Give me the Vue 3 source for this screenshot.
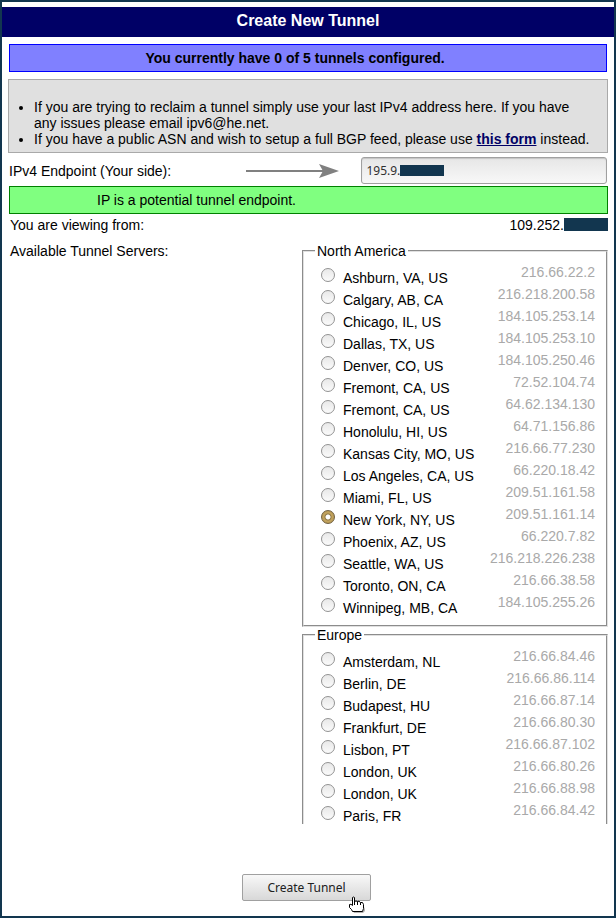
<script setup>
import { ref } from 'vue';

const endpoint = ref('195.9.');
const selected = ref('209.51.161.14');

const regions = [
  {
    name: 'North America',
    open: false,
    servers: [
      { city: 'Ashburn, VA, US', ip: '216.66.22.2' },
      { city: 'Calgary, AB, CA', ip: '216.218.200.58' },
      { city: 'Chicago, IL, US', ip: '184.105.253.14' },
      { city: 'Dallas, TX, US', ip: '184.105.253.10' },
      { city: 'Denver, CO, US', ip: '184.105.250.46' },
      { city: 'Fremont, CA, US', ip: '72.52.104.74' },
      { city: 'Fremont, CA, US', ip: '64.62.134.130' },
      { city: 'Honolulu, HI, US', ip: '64.71.156.86' },
      { city: 'Kansas City, MO, US', ip: '216.66.77.230' },
      { city: 'Los Angeles, CA, US', ip: '66.220.18.42' },
      { city: 'Miami, FL, US', ip: '209.51.161.58' },
      { city: 'New York, NY, US', ip: '209.51.161.14' },
      { city: 'Phoenix, AZ, US', ip: '66.220.7.82' },
      { city: 'Seattle, WA, US', ip: '216.218.226.238' },
      { city: 'Toronto, ON, CA', ip: '216.66.38.58' },
      { city: 'Winnipeg, MB, CA', ip: '184.105.255.26' }
    ]
  },
  {
    name: 'Europe',
    open: true,
    servers: [
      { city: 'Amsterdam, NL', ip: '216.66.84.46' },
      { city: 'Berlin, DE', ip: '216.66.86.114' },
      { city: 'Budapest, HU', ip: '216.66.87.14' },
      { city: 'Frankfurt, DE', ip: '216.66.80.30' },
      { city: 'Lisbon, PT', ip: '216.66.87.102' },
      { city: 'London, UK', ip: '216.66.80.26' },
      { city: 'London, UK', ip: '216.66.88.98' },
      { city: 'Paris, FR', ip: '216.66.84.42' }
    ]
  }
];
</script>

<template>
  <form class="tunnel-page" @submit.prevent>
    <h1 class="page-title">Create New Tunnel</h1>

    <div class="content">
      <p class="quota">You currently have 0 of 5 tunnels configured.</p>

      <ul class="notes">
        <li>If you are trying to reclaim a tunnel simply use your last IPv4 address here. If you have any issues please email ipv6@he.net.</li>
        <li>If you have a public ASN and wish to setup a full BGP feed, please use <a href="#">this form</a> instead.</li>
      </ul>

      <div class="endpoint-row">
        <label for="endpoint">IPv4 Endpoint (Your side):</label>
        <svg class="arrow" width="94" height="14" viewBox="0 0 94 14">
          <path d="M0 7H78" stroke="#808080" stroke-width="2" />
          <path d="M73 0L93 7L73 14L77 7Z" fill="#808080" />
        </svg>
        <div class="endpoint-field">
          <input id="endpoint" v-model="endpoint" type="text" />
          <span class="mask field-mask"></span>
        </div>
      </div>

      <p class="status">IP is a potential tunnel endpoint.</p>

      <div class="viewing-row">
        <span>You are viewing from:</span>
        <span class="viewer">109.252.<span class="mask"></span></span>
      </div>

      <div class="servers-row">
        <span class="servers-title">Available Tunnel Servers:</span>
        <div class="regions">
          <fieldset v-for="region in regions" :key="region.name" :class="{ 'is-open': region.open }">
            <legend>{{ region.name }}</legend>
            <div v-for="server in region.servers" :key="server.ip" class="server">
              <input :id="server.ip" v-model="selected" type="radio" name="server" :value="server.ip" />
              <label :for="server.ip">{{ server.city }}</label>
              <span class="ip">{{ server.ip }}</span>
            </div>
          </fieldset>
        </div>
      </div>
    </div>

    <div class="actions">
      <button type="submit">Create Tunnel</button>
      <!-- Hand pointer over the button -->
      <svg class="pointer" width="18" height="18" viewBox="0 0 18 18">
        <path d="M5 15H15L17 11V15L15 17H6Z" fill="#808080" opacity=".6" />
        <path d="M4.500 9.500V1.500Q5.500 .5 6.500 1.500V5.500Q8 4.500 9.500 5.500Q11 4.500 12.500 6.500Q15 5.500 15.500 8.500V12.500L14.500 15.500H4.500L3.500 13.500L1.500 11.500V8.500Q3 7.500 4.500 9.500Z" fill="#fff" stroke="#000" />
        <path d="M6.500 5V9M9.500 5.500V9M12.500 6.500V9" stroke="#000" />
      </svg>
    </div>
  </form>
</template>

<style>
body {
  margin: 0;
}
</style>

<style scoped>
.tunnel-page {
  box-sizing: border-box;
  min-height: 100vh;
  padding-top: 5px;
  border: 2px solid #12364f;
  background: #fff;
  color: #000;
  font: 14px/16px "Liberation Sans", Arial, sans-serif;
}

.page-title {
  margin: 0;
  padding-bottom: 2px;
  background: #000066;
  color: #fff;
  font-size: 16px;
  line-height: 28px;
  text-align: center;
}

.content {
  padding: 7px 6px 0;
}

.quota {
  margin: 0 1px;
  padding: 5px 26px 5px 0;
  border: 1px solid #0000ff;
  background: #8080ff;
  font-weight: bold;
  text-align: center;
}

.notes {
  margin: 7px 0 4px;
  padding: 19px 12px 5px 25px;
  border: 1px solid #a9a9a9;
  background: #e0e0e0;
}

.notes a {
  color: #000066;
  font-weight: bold;
}

.endpoint-row {
  display: flex;
  align-items: center;
  padding-left: 1px;
}

.endpoint-row label {
  flex: 1;
}

.arrow {
  flex: none;
  margin-right: 21px;
}

.endpoint-field {
  position: relative;
  width: 41%;
  margin-right: 1px;
}

.endpoint-field input {
  box-sizing: border-box;
  display: block;
  width: 100%;
  height: 27px;
  padding: 0 4px;
  border: 1px solid #a0a0a0;
  border-radius: 3px;
  background: linear-gradient(#e6e6e6, #f8f8f8);
  box-shadow: inset 0 1px 1px #c4c4c4;
  color: #303030;
  font: 12px "Noto Sans", sans-serif;
}

.mask {
  display: inline-block;
  width: 44px;
  height: 13px;
  background: #12364f;
  vertical-align: top;
}

.field-mask {
  position: absolute;
  top: 8px;
  left: 39px;
  height: 11px;
}

.status {
  margin: 2px 0 3px 1px;
  padding: 5px 87px;
  border: 1px solid #008000;
  background: #80ff80;
}

.viewing-row {
  display: flex;
  justify-content: space-between;
  padding-left: 2px;
}

.viewer .mask {
  margin-top: 1px;
}

.servers-row {
  display: flex;
  justify-content: space-between;
  margin-top: 10px;
  padding-left: 2px;
}

.regions {
  width: calc(50% + 7px);
}

fieldset {
  min-width: 0;
  margin: 0;
  padding: 5px 11px 9px;
  border: 2px groove #e0e0e0;
}

fieldset.is-open {
  padding-bottom: 0;
  border-bottom: none;
}

legend {
  padding: 0 2px;
}

.server {
  display: flex;
  align-items: center;
  gap: 8px;
  height: 22px;
  padding-left: 6px;
}

.server input {
  appearance: none;
  flex: none;
  box-sizing: border-box;
  width: 14px;
  height: 14px;
  margin: 0;
  border: 1px solid #929292;
  border-radius: 50%;
  background: linear-gradient(#e8e8e8, #fafafa);
}

.server input:checked {
  border-color: #706040;
  background: radial-gradient(circle, #fff 2px, #8c7440 3px, #c4a560 4px, #b99a54 6px);
}

.server label {
  flex: 1;
  align-self: flex-end;
}

.ip {
  align-self: flex-start;
  color: #a9a9a9;
}

.actions {
  position: relative;
  width: max-content;
  margin: 50px auto 0;
  padding-right: 3px;
}

.actions button {
  display: block;
  height: 27px;
  padding: 0 24px;
  border: 1px solid #a0a0a0;
  border-radius: 2px;
  background: linear-gradient(#f8f8f8, #d8d8d8);
  color: #202020;
  font: 12px "Noto Sans", sans-serif;
}

.pointer {
  position: absolute;
  top: 22px;
  right: 8px;
}
</style>
